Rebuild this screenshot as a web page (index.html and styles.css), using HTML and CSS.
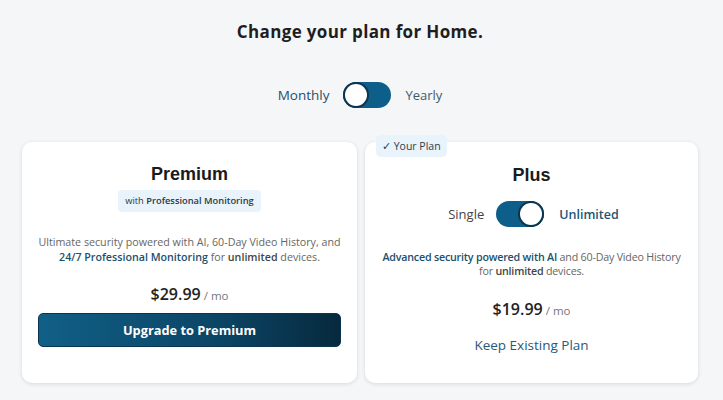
FILE: index.html
```html
<!DOCTYPE html>
<html>
<head>
<meta charset="utf-8">
<link rel="stylesheet" href="styles.css">
</head>
<body>
<main class="page">
  <h1 class="title">Change your plan for Home.</h1>
  <div class="period">
    <span class="period-label">Monthly</span>
    <span class="switch switch-off"><span class="knob"></span></span>
    <span class="period-label period-muted">Yearly</span>
  </div>
  <div class="cards">
    <section class="card">
      <h2 class="plan-name">Premium</h2>
      <div class="badge">with <b>Professional Monitoring</b></div>
      <p class="desc">Ultimate security powered with AI, 60-Day Video History, and <b class="hl">24/7 Professional Monitoring</b> for <b>unlimited</b> devices.</p>
      <div class="price"><span class="amount">$29.99</span> <span class="per">/ mo</span></div>
      <button class="btn-primary">Upgrade to Premium</button>
    </section>
    <section class="card card-current">
      <div class="your-plan">&#10003; Your Plan</div>
      <h2 class="plan-name plan-plus">Plus</h2>
      <div class="devices">
        <span class="dev-label">Single</span>
        <span class="switch switch-on"><span class="knob"></span></span>
        <span class="dev-label dev-active">Unlimited</span>
      </div>
      <p class="desc desc-plus"><b class="hl">Advanced security powered with AI</b> and 60-Day Video History for <b>unlimited</b> devices.</p>
      <div class="price price-plus"><span class="amount">$19.99</span> <span class="per">/ mo</span></div>
      <button class="btn-link">Keep Existing Plan</button>
    </section>
  </div>
</main>
</body>
</html>
```

FILE: styles.css
```css
* { box-sizing: border-box; }
html, body { margin: 0; padding: 0; }
body {
  background: #f5f6f8;
  font-family: "Open Sans", "Liberation Sans", sans-serif;
  color: #222;
  width: 723px;
  height: 400px;
  overflow: hidden;
}
.page {
  display: flex;
  flex-direction: column;
  align-items: center;
  padding: 20px 25px 0 22px;
}
.title {
  margin: 0;
  font-size: 17px;
  font-weight: 700;
  letter-spacing: 0.35px;
  color: #1e1e1e;
  line-height: 24px;
}
.period {
  display: flex;
  align-items: center;
  gap: 14px;
  margin-top: 38px;
  height: 26px;
}
.period-label {
  font-size: 13.5px;
  color: #1f4f6b;
}
.period-muted { color: #3d5a6c; font-size: 13px; }
.switch {
  position: relative;
  display: inline-flex;
  align-items: center;
  width: 48px;
  height: 26px;
  border-radius: 13px;
  background: #0d5e89;
  padding: 3px;
}
.switch-on { justify-content: flex-end; }
.knob {
  width: 22px;
  height: 22px;
  border-radius: 50%;
  background: #fff;
  box-shadow: 0 0 0 2px #0a3550;
}
.switch-off .knob { margin-left: -1px; }
.switch-on .knob { margin-right: -1px; }
.cards {
  display: flex;
  gap: 8px;
  margin-top: 34px;
  width: 100%;
}
.card {
  position: relative;
  flex: 1;
  height: 241px;
  background: #fff;
  border-radius: 10px;
  box-shadow: 0 1px 4px rgba(0,0,0,0.12);
  display: flex;
  flex-direction: column;
  align-items: center;
  padding: 20px 8px 0;
}
.card:first-child { flex: 0 0 335px; }
.plan-name {
  margin: 0;
  font-family: "Liberation Sans", Arial, sans-serif;
  font-size: 18px;
  font-weight: 700;
  line-height: 24px;
  color: #1b1b1b;
}
.badge {
  margin-top: 4px;
  background: #e9f3fb;
  border-radius: 4px;
  padding: 0 7px;
  height: 22px;
  line-height: 22px;
  font-size: 9.3px;
  color: #333;
}
.badge b { font-weight: 600; color: #2a3a45; }
.desc {
  margin: 23px 0 0;
  text-align: center;
  font-size: 10.7px;
  line-height: 15px;
  color: #666;
}
.desc b { font-weight: 600; color: #444; }
.desc b.hl { color: #1d4f6e; }
.price {
  margin-top: 18px;
  display: flex;
  align-items: baseline;
  gap: 3px;
}
.amount {
  font-size: 16px;
  font-weight: 600;
  color: #222;
}
.per {
  font-size: 11.5px;
  color: #777;
}
.btn-primary {
  margin-top: 8px;
  width: 303px;
  height: 34px;
  border: 1px solid #0a3550;
  border-radius: 5px;
  background: linear-gradient(90deg, #115f87 0%, #0b4565 60%, #07293d 100%);
  color: #fff;
  font-family: "Open Sans", "Liberation Sans", sans-serif;
  font-weight: 700;
  font-size: 12.8px;
  cursor: pointer;
}
.your-plan {
  position: absolute;
  top: -7px;
  left: 11px;
  background: #e9f3fb;
  border-radius: 5px;
  height: 22px;
  line-height: 22px;
  padding: 0 6px;
  font-size: 10.5px;
  color: #2f3f4a;
}
.plan-plus { margin-top: 1px; }
.devices {
  display: flex;
  align-items: center;
  gap: 12px;
  margin-top: 14px;
  margin-left: 4px;
}
.dev-label { font-size: 13px; color: #444; }
.dev-active { color: #1d5577; font-weight: 600; margin-left: 3px; font-size: 12.5px; }
.desc-plus { margin-top: 23px; line-height: 14px; max-width: 312px; letter-spacing: -0.2px; }
.price-plus { margin-top: 20px; }
.btn-link {
  margin-top: 15px;
  background: none;
  border: none;
  font-family: "Open Sans", "Liberation Sans", sans-serif;
  font-size: 13.5px;
  color: #26597a;
  font-weight: 500;
  cursor: pointer;
}
```
